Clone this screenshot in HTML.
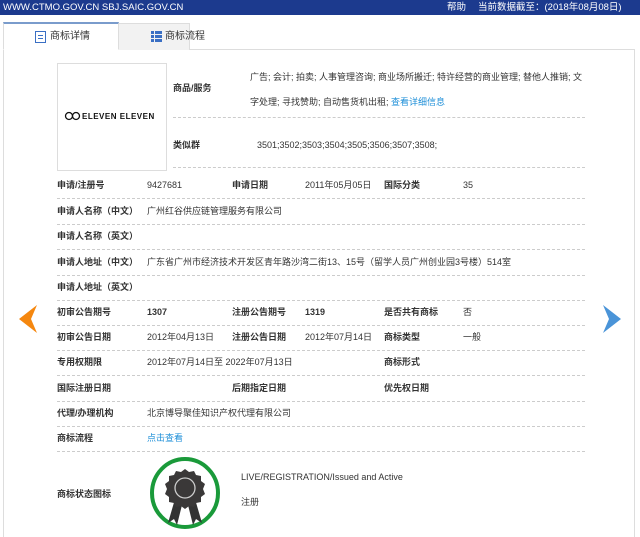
<!DOCTYPE html>
<html style="overflow:hidden;height:537px"><head><meta charset="utf-8"><style>
*{margin:0;padding:0;box-sizing:border-box}
body{width:640px;height:537px;overflow:hidden;background:#fff;font-family:"Liberation Sans","Noto Sans CJK SC",sans-serif;font-size:9px;line-height:12px;color:#333;position:relative}
.a{position:absolute;white-space:nowrap;line-height:12px}
.bar{position:absolute;left:0;top:0;width:640px;height:15px;background:#1c3a8e;color:#fff;font-size:9.5px}
.bar .a{line-height:15px}
.lb{font-weight:bold;color:#333}
.d{position:absolute;height:0;border-top:1px dashed #ccc}
.blue{color:#1e8fd8}
</style></head><body>
<div class="bar"><span class="a" style="left:3px">WWW.CTMO.GOV.CN SBJ.SAIC.GOV.CN</span><span class="a" style="left:447px">帮助</span><span class="a" style="left:478px">当前数据截至：(2018年08月08日)</span></div>
<div class="a" style="left:3px;top:49px;width:632px;height:492px;border:1px solid #ddd"></div>
<div class="a" style="left:118px;top:23px;width:72px;height:27px;background:#f2f2f2;border:1px solid #ddd;border-bottom:none"></div>
<div class="a" style="left:3px;top:22px;width:116px;height:28px;background:#fff;border:1px solid #ddd;border-top:2px solid #7a9ccc;border-bottom:1px solid #fff"></div>
<div class="a" style="left:35px;top:31px;width:11px;height:12px;border:1.5px solid #3a6fc4;background:linear-gradient(#3a6fc4,#3a6fc4) 2px 3px/5px 1px no-repeat,linear-gradient(#3a6fc4,#3a6fc4) 2px 6px/5px 1px no-repeat"></div>
<span class="a" style="left:50px;top:31px;font-size:10px">商标详情</span>
<div class="a" style="left:151px;top:31px;width:11px;height:11px;background:repeating-linear-gradient(#3a6fc4 0 3px,transparent 3px 4px)"></div>
<div class="a" style="left:154px;top:31px;width:1px;height:11px;background:#f2f2f2"></div>
<span class="a" style="left:165px;top:31px;font-size:10px">商标流程</span>

<div class="a" style="left:57px;top:63px;width:110px;height:108px;border:1px solid #ddd"></div>
<svg class="a" style="left:64px;top:111px" width="18" height="12"><circle cx="5" cy="5" r="3.5" fill="none" stroke="#111" stroke-width="1.3"/><circle cx="12" cy="5" r="3.5" fill="none" stroke="#111" stroke-width="1.3"/></svg>
<span class="a" style="left:82px;top:111px;font-size:8px;font-weight:bold;letter-spacing:0.5px;color:#111">ELEVEN ELEVEN</span>

<span class="a lb" style="left:173px;top:82px">商品/服务</span>
<span class="a" style="left:250px;top:71px">广告; 会计; 拍卖; 人事管理咨询; 商业场所搬迁; 特许经营的商业管理; 替他人推销; 文</span>
<span class="a" style="left:250px;top:96px">字处理; 寻找赞助; 自动售货机出租; <span class="blue">查看详细信息</span></span>
<div class="d" style="left:173px;top:117px;width:412px"></div>
<span class="a lb" style="left:173px;top:139px">类似群</span>
<span class="a" style="left:257px;top:139px">3501;3502;3503;3504;3505;3506;3507;3508;</span>
<div class="d" style="left:173px;top:167px;width:412px"></div>

<span class="a lb" style="left:57px;top:179px">申请/注册号</span><span class="a" style="left:147px;top:179px">9427681</span><span class="a lb" style="left:232px;top:179px">申请日期</span><span class="a" style="left:305px;top:179px">2011年05月05日</span><span class="a lb" style="left:384px;top:179px">国际分类</span><span class="a" style="left:463px;top:179px">35</span>
<div class="d" style="left:57px;top:198px;width:528px"></div>
<span class="a lb" style="left:57px;top:205px">申请人名称（中文）</span><span class="a" style="left:147px;top:205px">广州红谷供应链管理服务有限公司</span>
<div class="d" style="left:57px;top:224px;width:528px"></div>
<span class="a lb" style="left:57px;top:230px">申请人名称（英文）</span>
<div class="d" style="left:57px;top:249px;width:528px"></div>
<span class="a lb" style="left:57px;top:256px">申请人地址（中文）</span><span class="a" style="left:147px;top:256px">广东省广州市经济技术开发区青年路沙湾二街13、15号（留学人员广州创业园3号楼）514室</span>
<div class="d" style="left:57px;top:275px;width:528px"></div>
<span class="a lb" style="left:57px;top:281px">申请人地址（英文）</span>
<div class="d" style="left:57px;top:300px;width:528px"></div>
<span class="a lb" style="left:57px;top:306px">初审公告期号</span><span class="a lb" style="left:147px;top:306px">1307</span><span class="a lb" style="left:232px;top:306px">注册公告期号</span><span class="a lb" style="left:305px;top:306px">1319</span><span class="a lb" style="left:384px;top:306px">是否共有商标</span><span class="a" style="left:463px;top:306px">否</span>
<div class="d" style="left:57px;top:325px;width:528px"></div>
<span class="a lb" style="left:57px;top:331px">初审公告日期</span><span class="a" style="left:147px;top:331px">2012年04月13日</span><span class="a lb" style="left:232px;top:331px">注册公告日期</span><span class="a" style="left:305px;top:331px">2012年07月14日</span><span class="a lb" style="left:384px;top:331px">商标类型</span><span class="a" style="left:463px;top:331px">一般</span>
<div class="d" style="left:57px;top:350px;width:528px"></div>
<span class="a lb" style="left:57px;top:356px">专用权期限</span><span class="a" style="left:147px;top:356px">2012年07月14日至 2022年07月13日</span><span class="a lb" style="left:384px;top:356px">商标形式</span>
<div class="d" style="left:57px;top:375px;width:528px"></div>
<span class="a lb" style="left:57px;top:382px">国际注册日期</span><span class="a lb" style="left:232px;top:382px">后期指定日期</span><span class="a lb" style="left:384px;top:382px">优先权日期</span>
<div class="d" style="left:57px;top:401px;width:528px"></div>
<span class="a lb" style="left:57px;top:407px">代理/办理机构</span><span class="a" style="left:147px;top:407px">北京博导聚佳知识产权代理有限公司</span>
<div class="d" style="left:57px;top:426px;width:528px"></div>
<span class="a lb" style="left:57px;top:432px">商标流程</span><span class="a blue" style="left:147px;top:432px">点击查看</span>
<div class="d" style="left:57px;top:451px;width:528px"></div>
<span class="a lb" style="left:57px;top:488px">商标状态图标</span>
<svg class="a" style="left:148px;top:455px" width="76" height="78"><ellipse cx="37" cy="38" rx="33" ry="34" fill="none" stroke="#1a9a3a" stroke-width="4"/>
<path d="M27 44 L20 68 L26 64 L29 70 L34 50 Z M47 44 L54 68 L48 64 L45 70 L40 50 Z" fill="#333"/>
<path d="M37 14 l4 3 5-1 2 4 5 1 0 5 4 3-2 5 2 5-4 3 0 5-5 1-2 4-5-1-4 3-4-3-5 1-2-4-5-1 0-5-4-3 2-5-2-5 4-3 0-5 5-1 2-4 5 1z" fill="#3a3838"/>
<circle cx="37" cy="33" r="10" fill="#3a3838" stroke="#ccc" stroke-width="1.3"/></svg>
<span class="a" style="left:241px;top:471px">LIVE/REGISTRATION/Issued and Active</span>
<span class="a" style="left:241px;top:496px">注册</span>

<svg class="a" style="left:15px;top:303px" width="24" height="32"><path d="M22 2 L4 16 L22 30 L16 16 Z" fill="#f5870f"/></svg>
<svg class="a" style="left:601px;top:303px" width="24" height="32"><path d="M2 2 L20 16 L2 30 L8 16 Z" fill="#4a94d8"/></svg>
</body></html>
